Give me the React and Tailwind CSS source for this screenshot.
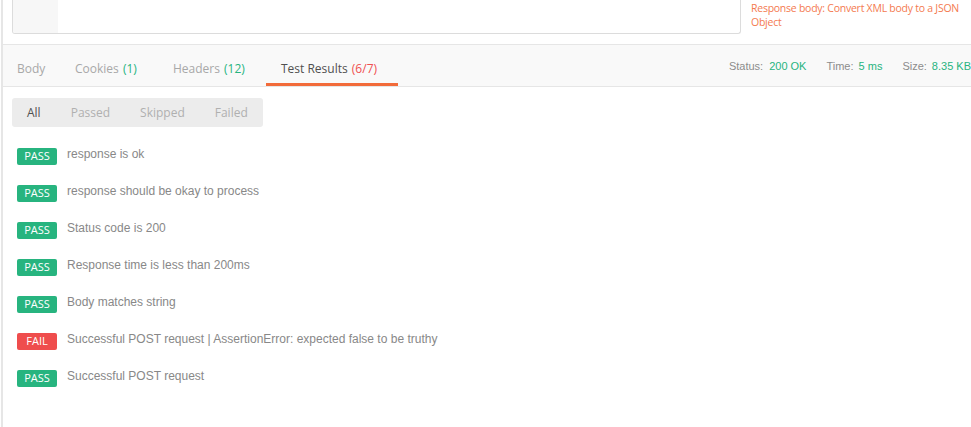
export default function App() {
  const tests = [
    { ok: true, name: "response is ok" },
    { ok: true, name: "response should be okay to process" },
    { ok: true, name: "Status code is 200" },
    { ok: true, name: "Response time is less than 200ms" },
    { ok: true, name: "Body matches string" },
    { ok: false, name: "Successful POST request | AssertionError: expected false to be truthy" },
    { ok: true, name: "Successful POST request" },
  ];
  const os = { fontFamily: '"Open Sans", "Liberation Sans", sans-serif' };
  const ls = { fontFamily: '"Liberation Sans", Arial, sans-serif' };
  return (
    <div className="w-full h-[427px] bg-white pl-px overflow-hidden">
      <div className="h-full border-l-2 border-[#e6e6e6] flex flex-col">
        {/* top editor remnant */}
        <div className="h-[44px] flex items-start shrink-0">
          <div className="ml-[9px] w-[729px] h-[34px] border-x border-b border-[#dcdcdc] rounded-b-[3px] flex overflow-hidden">
            <div className="w-[45px] h-full bg-[#f7f7f7]"></div>
          </div>
          <div
            className="ml-[10px] mt-px w-[214px] text-[10.5px] tracking-[-0.25px] leading-[14px] text-[#f47a50]"
            style={os}
          >
            Response body: Convert XML body to a JSON Object
          </div>
        </div>
        {/* tab bar */}
        <div className="h-[43px] shrink-0 border-y border-[#e6e6e6] bg-[#f9f9f9] flex items-stretch">
          <div className="flex text-[12px] leading-[16px]" style={os}>
            <div className="w-[57px] pl-[14px] pt-[16px] pb-[6px] border-b-[3px] border-transparent text-[#a8a8a8]">
              Body
            </div>
            <div className="w-[98px] pl-[15px] pt-[16px] pb-[6px] border-b-[3px] border-transparent text-[#a8a8a8] whitespace-nowrap">
              Cookies <span className="text-[#27b47f] ml-[1px]">(1)</span>
            </div>
            <div className="w-[108px] pl-[15px] pt-[16px] pb-[6px] border-b-[3px] border-transparent text-[#a8a8a8] whitespace-nowrap">
              Headers <span className="text-[#27b47f] ml-[1px]">(12)</span>
            </div>
            <div className="w-[132px] pl-[15px] pt-[16px] pb-[6px] border-b-[3px] border-[#f26b3a] text-[#505050] whitespace-nowrap">
              Test Results <span className="text-[#f05050] ml-[1px]">(6/7)</span>
            </div>
          </div>
          <div
            className="ml-auto flex items-center gap-[20px] text-[11px] pt-px whitespace-nowrap"
            style={ls}
          >
            <div className="flex gap-[6px]">
              <span className="text-[#8c8c8c]">Status:</span>
              <span className="text-[#27b47f]">200 OK</span>
            </div>
            <div className="flex gap-[5px]">
              <span className="text-[#8c8c8c]">Time:</span>
              <span className="text-[#27b47f]">5 ms</span>
            </div>
            <div className="flex gap-[5px]">
              <span className="text-[#8c8c8c]">Size:</span>
              <span className="text-[#27b47f]">8.35 KB</span>
            </div>
          </div>
        </div>
        {/* filter */}
        <div className="mt-[11px] ml-[9px] w-[251px] h-[29px] bg-[#ececec] rounded-[3px] flex items-center text-[12px]" style={os}>
          <div className="px-[15px] text-[#505050]">All</div>
          <div className="px-[15px] text-[#b0b0b0]">Passed</div>
          <div className="px-[15px] text-[#b0b0b0]">Skipped</div>
          <div className="px-[15px] text-[#b0b0b0]">Failed</div>
        </div>
        {/* tests */}
        <div className="mt-[19px] ml-[14px] flex flex-col gap-[21px]">
          {tests.map((t, i) => (
            <div key={i} className="flex items-start h-[16px]">
              <div
                className={
                  "mt-[2px] w-[40px] h-[17px] rounded-[2px] flex items-center justify-center text-white text-[11px] shrink-0 " +
                  (t.ok ? "bg-[#27b47f]" : "bg-[#ef4d4d]")
                }
                style={os}
              >
                {t.ok ? "PASS" : "FAIL"}
              </div>
              <div className="ml-[10px] text-[12px] leading-[16px] text-[#888888] whitespace-nowrap" style={ls}>
                {t.name}
              </div>
            </div>
          ))}
        </div>
      </div>
    </div>
  );
}
